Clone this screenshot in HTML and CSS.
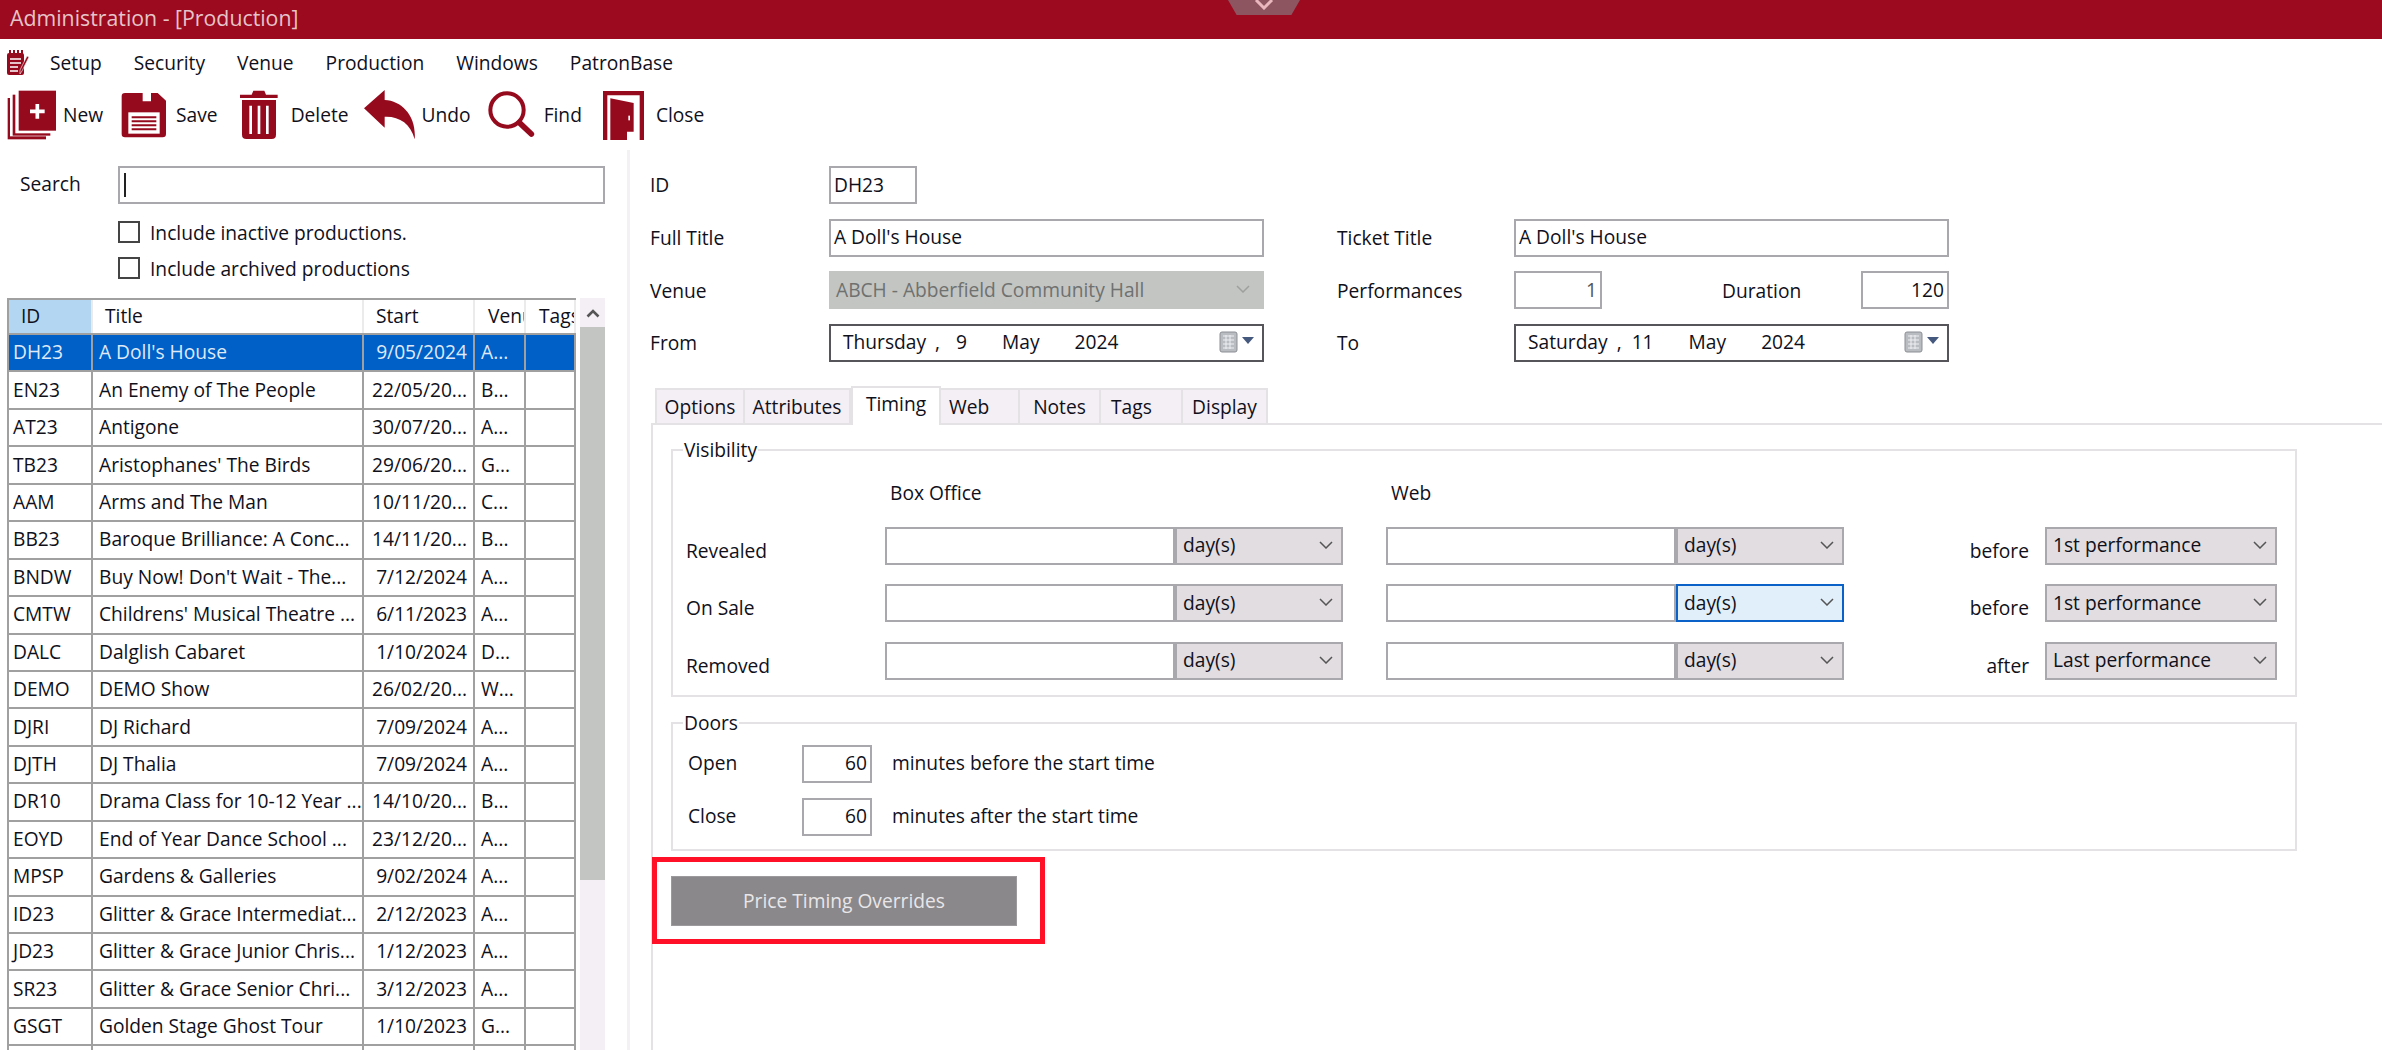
FILE: index.html
```html
<!DOCTYPE html>
<html lang="en">
<head>
<meta charset="utf-8">
<title>Administration - [Production]</title>
<link rel="stylesheet" href="styles.css">
</head>
<body>
<header class="titlebar">
  <span class="title">Administration - [Production]</span>
  <div class="notch"><svg width="26" height="10" viewBox="0 0 26 10"><path d="M5 0 L13 8 L21 0" fill="none" stroke="#e9b7bd" stroke-width="3"/></svg></div>
</header>
<nav class="menubar">
  <svg class="menu-icon" width="24" height="25" viewBox="0 0 24 25"><rect x="0" y="3" width="17" height="22" rx="2" fill="#960a1e"/><path d="M3 0v5M7 0v5M11 0v5M15 0v5" stroke="#960a1e" stroke-width="2"/><path d="M3 9h11M3 13h11M3 17h8M3 21h8" stroke="#fff" stroke-width="1.6"/><path d="M22 7 L15 21 L13 24 L13 20 L20 6 Z" fill="#960a1e" stroke="#fff" stroke-width=".6"/></svg>
  <span class="menu-item">Setup</span>
  <span class="menu-item">Security</span>
  <span class="menu-item">Venue</span>
  <span class="menu-item">Production</span>
  <span class="menu-item">Windows</span>
  <span class="menu-item">PatronBase</span>
</nav>
<div class="toolbar">
  <div class="tool t-new">
    <svg width="50" height="50" viewBox="20 28 150 150"><rect x="22" y="52" width="115" height="124" fill="#960a1e"/><rect x="29" y="44" width="125" height="123" fill="#fff"/><rect x="37" y="42" width="113" height="123" fill="#960a1e"/><rect x="45" y="25" width="125" height="133" fill="#fff"/><rect x="55" y="30" width="112" height="120" fill="#960a1e"/><path d="M111 70v44M89 92h44" stroke="#fff" stroke-width="11"/></svg>
    <span>New</span>
  </div>
  <div class="tool t-save">
    <svg width="46" height="46" viewBox="368 34 138 138"><path d="M380 37 H433 V62 H458 V37 H478 L503 60 V160 Q503 170 493 170 H380 Q370 170 370 160 V47 Q370 37 380 37 Z" fill="#960a1e"/><rect x="390" y="95" width="94" height="64" fill="#fff"/><path d="M400 110h74M400 122h74M400 134h74M400 146h74" stroke="#960a1e" stroke-width="6"/></svg>
    <span>Save</span>
  </div>
  <div class="tool t-delete">
    <svg width="38" height="50" viewBox="722 28 114 150"><path d="M757 42 L762 30 H795 L800 42 H835 V52 H722 V42 Z" fill="#960a1e"/><path d="M728 58 H830 V162 Q830 175 817 175 H741 Q728 175 728 162 Z" fill="#960a1e"/><path d="M754 75v85M779 75v85M804 75v85" stroke="#fff" stroke-width="8"/></svg>
    <span>Delete</span>
  </div>
  <div class="tool t-undo">
    <svg width="52" height="50" viewBox="10 30 156 150"><path d="M10 85 L72 30 V60 C125 62 168 110 162 178 C150 130 115 108 72 110 V143 Z" fill="#960a1e"/></svg>
    <span>Undo</span>
  </div>
  <div class="tool t-find">
    <svg width="48" height="50" viewBox="384 30 144 150"><circle cx="441" cy="90" r="50" fill="none" stroke="#960a1e" stroke-width="12"/><path d="M478 128 L514 162" stroke="#960a1e" stroke-width="17" stroke-linecap="round"/></svg>
    <span>Find</span>
  </div>
  <div class="tool t-close">
    <svg width="41" height="49" viewBox="728 30 123 147"><path d="M728 177 V30 H851 V177 H838 V43 H741 V177 Z" fill="#960a1e"/><path d="M750 52 L820 66 V152 H800 V177 L750 177 Z" fill="#960a1e"/><rect x="804" y="104" width="5" height="14" fill="#fff"/></svg>
    <span>Close</span>
  </div>
</div>
<main class="main">
  <section class="left">
    <div class="search-row">
      <span class="search-label">Search</span>
      <div class="search-box"><span class="caret"></span></div>
    </div>
    <label class="check first"><span class="box"></span>Include inactive productions.</label>
    <label class="check"><span class="box"></span>Include archived productions</label>
    <div class="list-wrap">
      <div class="grid">
        <div class="row head"><div class="cell sel">ID</div><div class="cell">Title</div><div class="cell">Start</div><div class="cell">Venue</div><div class="cell">Tags</div></div>
        <div class="row active"><div class="cell">DH23</div><div class="cell">A Doll's House</div><div class="cell r">9/05/2024</div><div class="cell">A...</div><div class="cell"></div></div>
        <div class="row"><div class="cell">EN23</div><div class="cell">An Enemy of The People</div><div class="cell r">22/05/20...</div><div class="cell">B...</div><div class="cell"></div></div>
        <div class="row"><div class="cell">AT23</div><div class="cell">Antigone</div><div class="cell r">30/07/20...</div><div class="cell">A...</div><div class="cell"></div></div>
        <div class="row"><div class="cell">TB23</div><div class="cell">Aristophanes' The Birds</div><div class="cell r">29/06/20...</div><div class="cell">G...</div><div class="cell"></div></div>
        <div class="row"><div class="cell">AAM</div><div class="cell">Arms and The Man</div><div class="cell r">10/11/20...</div><div class="cell">C...</div><div class="cell"></div></div>
        <div class="row"><div class="cell">BB23</div><div class="cell">Baroque Brilliance: A Conc...</div><div class="cell r">14/11/20...</div><div class="cell">B...</div><div class="cell"></div></div>
        <div class="row"><div class="cell">BNDW</div><div class="cell">Buy Now! Don't Wait - The...</div><div class="cell r">7/12/2024</div><div class="cell">A...</div><div class="cell"></div></div>
        <div class="row"><div class="cell">CMTW</div><div class="cell">Childrens' Musical Theatre ...</div><div class="cell r">6/11/2023</div><div class="cell">A...</div><div class="cell"></div></div>
        <div class="row"><div class="cell">DALC</div><div class="cell">Dalglish Cabaret</div><div class="cell r">1/10/2024</div><div class="cell">D...</div><div class="cell"></div></div>
        <div class="row"><div class="cell">DEMO</div><div class="cell">DEMO Show</div><div class="cell r">26/02/20...</div><div class="cell">W...</div><div class="cell"></div></div>
        <div class="row"><div class="cell">DJRI</div><div class="cell">DJ Richard</div><div class="cell r">7/09/2024</div><div class="cell">A...</div><div class="cell"></div></div>
        <div class="row"><div class="cell">DJTH</div><div class="cell">DJ Thalia</div><div class="cell r">7/09/2024</div><div class="cell">A...</div><div class="cell"></div></div>
        <div class="row"><div class="cell">DR10</div><div class="cell">Drama Class for 10-12 Year ...</div><div class="cell r">14/10/20...</div><div class="cell">B...</div><div class="cell"></div></div>
        <div class="row"><div class="cell">EOYD</div><div class="cell">End of Year Dance School ...</div><div class="cell r">23/12/20...</div><div class="cell">A...</div><div class="cell"></div></div>
        <div class="row"><div class="cell">MPSP</div><div class="cell">Gardens &amp; Galleries</div><div class="cell r">9/02/2024</div><div class="cell">A...</div><div class="cell"></div></div>
        <div class="row"><div class="cell">ID23</div><div class="cell">Glitter &amp; Grace Intermediat...</div><div class="cell r">2/12/2023</div><div class="cell">A...</div><div class="cell"></div></div>
        <div class="row"><div class="cell">JD23</div><div class="cell">Glitter &amp; Grace Junior Chris...</div><div class="cell r">1/12/2023</div><div class="cell">A...</div><div class="cell"></div></div>
        <div class="row"><div class="cell">SR23</div><div class="cell">Glitter &amp; Grace Senior Chri...</div><div class="cell r">3/12/2023</div><div class="cell">A...</div><div class="cell"></div></div>
        <div class="row"><div class="cell">GSGT</div><div class="cell">Golden Stage Ghost Tour</div><div class="cell r">1/10/2023</div><div class="cell">G...</div><div class="cell"></div></div>
        <div class="row stub"><div class="cell"></div><div class="cell"></div><div class="cell"></div><div class="cell"></div><div class="cell"></div></div>
      </div>
      <div class="scrollbar">
        <div class="scroll-up"><svg width="14" height="10" viewBox="0 0 14 10"><path d="M1.5 8.5 L7 3 L12.5 8.5" fill="none" stroke="#555" stroke-width="2.6"/></svg></div>
        <div class="scroll-thumb"></div>
      </div>
    </div>
  </section>
  <section class="right">
    <div class="form">
      <span class="lab">ID</span>
      <div class="cellwrap"><div class="field w-id">DH23</div></div>
      <span></span><span></span>
      <span class="lab">Full Title</span>
      <div class="field">A Doll's House</div>
      <span class="lab">Ticket Title</span>
      <div class="field">A Doll's House</div>
      <span class="lab">Venue</span>
      <div class="field disabled"><span>ABCH - Abberfield Community Hall</span><svg class="chev" width="14" height="8" viewBox="0 0 14 8"><path d="M1 1 L7 7 L13 1" fill="none" stroke="#9da09d" stroke-width="1.5"/></svg></div>
      <span class="lab">Performances</span>
      <div class="pair"><div class="field num w-num muted">1</div><span class="lab">Duration</span><div class="field num w-num">120</div></div>
      <span class="lab">From</span>
      <div class="field date">
        <span>Thursday</span><span class="d-comma">,</span><span class="d-num">9</span><span class="d-mon">May</span><span>2024</span>
        <svg class="cal" width="36" height="22" viewBox="0 0 36 22"><rect x="1" y="1" width="17" height="20" rx="2" fill="#b9bcc0" stroke="#8b8f95"/><path d="M4 5h11M4 9h11M4 13h11M4 17h11M7 4v14M11 4v14" stroke="#eef0f3" stroke-width="1"/><path d="M23 6 H35 L29 13 Z" fill="#45587e"/></svg>
      </div>
      <span class="lab">To</span>
      <div class="field date">
        <span>Saturday</span><span class="d-comma">,</span><span class="d-num2">11</span><span class="d-mon">May</span><span>2024</span>
        <svg class="cal" width="36" height="22" viewBox="0 0 36 22"><rect x="1" y="1" width="17" height="20" rx="2" fill="#b9bcc0" stroke="#8b8f95"/><path d="M4 5h11M4 9h11M4 13h11M4 17h11M7 4v14M11 4v14" stroke="#eef0f3" stroke-width="1"/><path d="M23 6 H35 L29 13 Z" fill="#45587e"/></svg>
      </div>
    </div>
    <div class="tabs">
      <span class="tab w-options">Options</span>
      <span class="tab w-attr">Attributes</span>
      <span class="tab current">Timing</span>
      <span class="tab w-web">Web</span>
      <span class="tab w-notes">Notes</span>
      <span class="tab w-tags">Tags</span>
      <span class="tab w-display">Display</span>
    </div>
    <div class="tabpage">
      <fieldset class="group">
        <legend>Visibility</legend>
        <div class="vis-grid">
          <span></span><span class="col-head">Box Office</span><span class="col-head">Web</span><span></span><span></span>
          <span class="row-label">Revealed</span>
          <div class="combo"><div class="blank"></div><div class="drop"><span>day(s)</span><svg width="14" height="8" viewBox="0 0 14 8"><path d="M1 1 L7 7 L13 1" fill="none" stroke="#555" stroke-width="1.5"/></svg></div></div>
          <div class="combo"><div class="blank"></div><div class="drop"><span>day(s)</span><svg width="14" height="8" viewBox="0 0 14 8"><path d="M1 1 L7 7 L13 1" fill="none" stroke="#555" stroke-width="1.5"/></svg></div></div>
          <span class="row-label end">before</span>
          <div class="drop wide"><span>1st performance</span><svg width="14" height="8" viewBox="0 0 14 8"><path d="M1 1 L7 7 L13 1" fill="none" stroke="#555" stroke-width="1.5"/></svg></div>
          <span class="row-label">On Sale</span>
          <div class="combo"><div class="blank"></div><div class="drop"><span>day(s)</span><svg width="14" height="8" viewBox="0 0 14 8"><path d="M1 1 L7 7 L13 1" fill="none" stroke="#555" stroke-width="1.5"/></svg></div></div>
          <div class="combo"><div class="blank"></div><div class="drop focus"><span>day(s)</span><svg width="14" height="8" viewBox="0 0 14 8"><path d="M1 1 L7 7 L13 1" fill="none" stroke="#555" stroke-width="1.5"/></svg></div></div>
          <span class="row-label end">before</span>
          <div class="drop wide"><span>1st performance</span><svg width="14" height="8" viewBox="0 0 14 8"><path d="M1 1 L7 7 L13 1" fill="none" stroke="#555" stroke-width="1.5"/></svg></div>
          <span class="row-label">Removed</span>
          <div class="combo"><div class="blank"></div><div class="drop"><span>day(s)</span><svg width="14" height="8" viewBox="0 0 14 8"><path d="M1 1 L7 7 L13 1" fill="none" stroke="#555" stroke-width="1.5"/></svg></div></div>
          <div class="combo"><div class="blank"></div><div class="drop"><span>day(s)</span><svg width="14" height="8" viewBox="0 0 14 8"><path d="M1 1 L7 7 L13 1" fill="none" stroke="#555" stroke-width="1.5"/></svg></div></div>
          <span class="row-label end">after</span>
          <div class="drop wide"><span>Last performance</span><svg width="14" height="8" viewBox="0 0 14 8"><path d="M1 1 L7 7 L13 1" fill="none" stroke="#555" stroke-width="1.5"/></svg></div>
        </div>
      </fieldset>
      <fieldset class="group doors">
        <legend>Doors</legend>
        <div class="door-row"><span class="door-label">Open</span><div class="field num w-door">60</div><span>minutes before the start time</span></div>
        <div class="door-row"><span class="door-label">Close</span><div class="field num w-door">60</div><span>minutes after the start time</span></div>
      </fieldset>
      <div class="highlight"><button class="price-btn" type="button">Price Timing Overrides</button></div>
    </div>
  </section>
</main>
</body>
</html>
```
FILE: styles.css
```css
* { box-sizing: border-box; }
html, body { margin: 0; padding: 0; }
body {
  width: 2382px; height: 1050px; overflow: hidden; background: #fff;
  font-family: "Open Sans", "Noto Sans", sans-serif; font-size: 19.2px; color: #10101a;
  display: flex; flex-direction: column;
}
.titlebar { height: 39px; flex: none; background: #9b0a1e; position: relative; display: flex; align-items: center; padding: 0 0 5px 10px; }
.title { color: #e6c4c9; font-size: 21.3px; }
.notch { position: absolute; left: 1228px; top: 0; width: 72px; height: 15px; background: #8d5560; clip-path: polygon(0 0, 100% 0, 88% 100%, 12% 100%); display: flex; justify-content: center; }
.menubar { height: 46px; flex: none; display: flex; align-items: center; padding-left: 7px; }
.menu-icon { margin-right: 19px; }
.menu-item { margin-right: 32px; }
.toolbar { height: 50px; flex: none; display: flex; align-items: center; padding-left: 7px; margin-top: 5px; }
.tool { display: flex; align-items: center; }
.tool span { margin-left: 9px; padding-bottom: 2px; }
.t-new span { margin-left: 6px; }
.t-save { margin-left: 18px; }
.t-delete { margin-left: 22px; }
.t-delete span { margin-left: 13px; }
.t-undo { margin-left: 15px; }
.t-undo span { margin-left: 6px; }
.t-find { margin-left: 17px; }
.t-find span { margin-left: 8px; }
.t-close { margin-left: 21px; }
.t-close span { margin-left: 12px; }
.main { flex: 1; min-height: 0; display: flex; margin-top: 10px; }
.left { width: 630px; flex: none; border-right: 3px solid #f3f1f3; padding: 16px 22px 0 7px; display: flex; flex-direction: column; }
.search-row { display: flex; align-items: center; height: 38px; }
.search-label { width: 111px; padding: 0 0 3px 13px; }
.search-box { flex: 1; height: 38px; border: 2px solid #a9a9ad; display: flex; align-items: center; padding-left: 4px; }
.caret { width: 2px; height: 24px; background: #222; }
.check { display: flex; align-items: center; height: 22px; margin-left: 111px; margin-top: 14px; }
.check.first { margin-top: 17px; }
.box { width: 22px; height: 22px; border: 2px solid #444; margin-right: 10px; }
.list-wrap { flex: 1; min-height: 0; display: flex; gap: 4px; margin-top: 19px; overflow: hidden; }
.grid { width: 569px; flex: none; border-top: 2px solid #a0a0a0; border-left: 2px solid #a0a0a0; }
.row { display: grid; grid-template-columns: 84px 271px 111px 51px 50px; height: 37.45px; border-bottom: 2px solid #a0a0a0; }
.row.stub { height: 12px; border-bottom: none; }
.cell { border-right: 2px solid #a0a0a0; padding: 0 0 2px 6px; white-space: nowrap; overflow: hidden; display: flex; align-items: center; }
.cell:first-child { padding-left: 4px; }
.cell.r { justify-content: flex-end; padding: 0 6px 2px 0; }
.row.head { height: 35px; border-bottom: 2px solid #a0a0a0; }
.row.head .cell { border-right: 2px solid #ebebeb; padding: 0 0 3px 12px; }
.row.head .cell:nth-child(4), .row.head .cell:nth-child(5) { padding-left: 13px; }
.cell.sel { background: #b3d7f2; }
.row.active { background: #0060c8; color: #dfe9f7; }
.scrollbar { width: 25px; flex: none; background: #f3eff4; display: flex; flex-direction: column; }
.scroll-up { height: 29px; display: flex; align-items: center; justify-content: center; }
.scroll-thumb { height: 553px; background: #c3c5c3; }
.right { flex: 1; min-width: 0; padding-top: 16px; display: flex; flex-direction: column; }
.form { display: grid; grid-template-columns: 179px 435px 250px 435px; grid-auto-rows: 38px; row-gap: 14.67px; padding-left: 20px; }
.form > :nth-child(4n+3) { margin-left: 73px; white-space: nowrap; }
.lab { display: flex; align-items: center; }
.form > .lab:first-child { padding-bottom: 2px; }
.field { height: 38px; border: 2px solid #a9a9ad; display: flex; align-items: center; padding: 0 3px 2px; background: #fff; }
.w-id { width: 88px; }
.pair { display: flex; align-items: center; }
.w-num { width: 88px; }
.pair .lab { margin-left: 120px; flex: 1; }
.num { justify-content: flex-end; }
.muted { color: #555; }
.disabled { background: #c3c5c3; border-color: #c3c5c3; color: #6f716f; justify-content: space-between; padding-left: 5px; }
.chev { margin-right: 9px; }
.date { border-color: #55555a; padding-left: 12px; }
.d-comma { margin-left: 9px; }
.d-num { margin-left: 16px; }
.d-mon { margin: 0 35px; }
.d-num2 { margin-left: 10px; }
.cal { margin-left: auto; margin-right: 4px; }
.tabs { display: flex; margin: 26px 0 0 25px; height: 35px; flex: none; align-items: flex-end; position: relative; z-index: 1; }
.tab { height: 35px; background: #f3eff4; border: 2px solid #e4e2e5; border-bottom: none; border-left-width: 0; display: flex; align-items: center; justify-content: center; }
.tab:first-child { border-left-width: 2px; }
.w-options { width: 90px; }
.w-attr { width: 106px; }
.current { width: 90px; height: 39px; background: #fff; padding-bottom: 6px; border-left-width: 2px; margin-bottom: -2px; }
.w-web { width: 79px; justify-content: flex-start; padding-left: 8px; }
.w-notes { width: 81px; }
.w-tags { width: 82px; justify-content: flex-start; padding-left: 10px; }
.w-display { width: 85px; }
.tabpage { flex: 1; min-height: 0; margin-left: 21px; border-top: 2px solid #e4e2e5; border-left: 2px solid #e4e2e5; padding: 13px 0 0 18px; }
.group { width: 1626px; margin: 0; padding: 0 18px 0 13px; border: 2px solid #e4e2e5; min-width: 0; height: 259px; }
.group legend { padding: 0 1px; margin-left: -3px; line-height: 24px; height: 24px; }
.vis-grid { display: grid; grid-template-columns: 199px 458px 501px 201px 232px; grid-template-rows: 45.5px 38px 38px 38px; row-gap: 19.5px; }
.vis-grid > :nth-child(5n+3) { margin-left: 43px; }
.col-head { padding: 17px 0 0 5px; }
.row-label { padding-top: 10px; display: block; }
.end { text-align: right; padding-right: 16px; }
.combo { display: flex; height: 38px; }
.blank { width: 290px; border: 2px solid #a9a9ad; }
.drop { width: 168px; height: 38px; background: #e1dde1; border: 2px solid #a9a9ad; display: flex; align-items: center; justify-content: space-between; padding: 0 8px 2px 6px; }
.drop.wide { width: 232px; }
.drop.focus { background: #e1effb; border-color: #0a62c8; }
.doors { margin-top: 14px; height: 140px; padding: 0 0 0 15px; }
.doors legend { margin-left: -5px; }
.door-row { display: flex; align-items: center; height: 38px; margin-top: 10px; }
.door-row + .door-row { margin-top: 15px; }
.door-label { width: 114px; padding-bottom: 2px; }
.door-row > span:last-child { padding-bottom: 2px; }
.w-door { width: 70px; margin-right: 20px; }
.highlight { width: 393px; height: 87px; margin: 6px 0 0 -19px; border: 5px solid #ff1027; padding: 14px 0 0 14px; }
.price-btn { width: 346px; height: 50px; background: #8a888a; border: 1px solid #9c9a9c; color: #e8e6e8; font: inherit; padding: 0; }
```
